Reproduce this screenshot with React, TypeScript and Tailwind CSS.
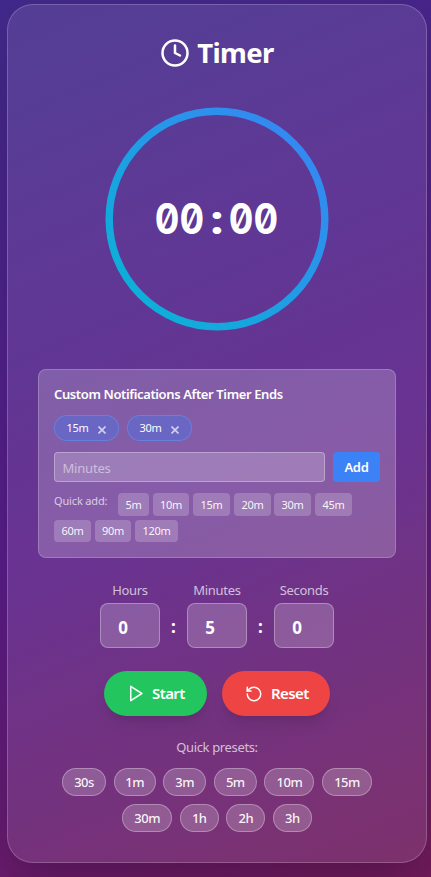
import { Clock, RotateCcw } from "lucide-react";

const quickAdd = [
  { label: "5m", box: "w-[31px] mr-1" },
  { label: "10m", box: "w-9 mr-1" },
  { label: "15m", box: "w-[37px] mr-1" },
  { label: "20m", box: "w-[37px] mr-[3px]" },
  { label: "30m", box: "w-[37px] mr-1" },
  { label: "45m", box: "w-[37px]" },
];
const quickAddMore = [
  { label: "60m", box: "w-[37px]" },
  { label: "90m", box: "w-9" },
  { label: "120m", box: "w-[43px]" },
];
const presets = [
  { label: "30s", box: "w-11" },
  { label: "1m", box: "w-[42px]" },
  { label: "3m", box: "w-[43px]" },
  { label: "5m", box: "w-[43px]" },
  { label: "10m", box: "w-[50px]" },
  { label: "15m", box: "w-[50px]" },
];
const presetsMore = [
  { label: "30m", box: "w-[50px]" },
  { label: "1h", box: "w-[39px]" },
  { label: "2h", box: "w-[39px]" },
  { label: "3h", box: "w-[39px]" },
];

function Chip({ label }: { label: string }) {
  return (
    <div className="flex h-[26px] w-[65px] items-center rounded-full border border-[#5b8bea]/80 bg-[#4f70e0]/50 bg-clip-padding pl-[11.5px] text-[11px] tracking-[-0.35px]">
      <span className="w-[31px]">{label}</span>
      <svg className="mt-[3px]" width="8" height="8" viewBox="0 0 8 8" stroke="white" strokeOpacity="0.7" strokeWidth="1.6">
        <path d="M.5 .5 7.5 7.5M7.5 .5 .5 7.5" />
      </svg>
    </div>
  );
}

function TimeField({ label, value }: { label: string; value: string }) {
  return (
    <label className="flex w-[60px] flex-col items-center">
      <span className="mb-[3px] text-[13px] leading-5 tracking-[-0.3px] text-white/70">{label}</span>
      <span className="flex h-[45px] w-[60px] items-center justify-center rounded-lg border border-white/30 bg-white/20 pr-[14px] pt-[4px] text-[17px] font-bold">
        {value}
      </span>
    </label>
  );
}

function SmallButton({ label, box }: { label: string; box: string }) {
  return (
    <button className={`flex shrink-0 items-center justify-center rounded bg-white/20 pt-px text-[11px] tracking-[-0.35px] text-white/95 ${box}`}>
      {label}
    </button>
  );
}

function Preset({ label, box }: { label: string; box: string }) {
  return (
    <button className={`flex h-7 shrink-0 items-center justify-center rounded-full border border-white/30 bg-white/20 pt-px text-[13px] font-medium tracking-[-0.5px] text-white/95 ${box}`}>
      {label}
    </button>
  );
}

export default function App() {
  return (
    <main className="h-[877px] overflow-hidden bg-[linear-gradient(157deg,#40298a_0%,#581c87_54%,#701a5a_100%)] pl-[7px] pr-1 pt-1 font-['Noto_Sans',sans-serif] text-white">
      <section className="flex h-[859px] w-[420px] flex-col items-center rounded-[26px] border border-white/20 bg-white/10 px-[30px] shadow-2xl">
        <h1 className="mt-7 flex h-10 items-center gap-[7px] text-[27.5px] font-bold tracking-[-0.6px]">
          <Clock size={30} strokeWidth={2} />
          Timer
        </h1>
        <div className="mt-[34px] grid h-[224px] w-[224px] place-items-center">
          <svg className="col-start-1 row-start-1" width="224" height="224" viewBox="0 0 224 224">
            <defs>
              <linearGradient id="ring" x1="0" y1="1" x2="1" y2="0">
                <stop offset="0" stopColor="#06b6d4" />
                <stop offset="1" stopColor="#3b82f6" />
              </linearGradient>
            </defs>
            <circle cx="112" cy="112" r="107.8" fill="none" stroke="url(#ring)" strokeWidth="7.4" />
          </svg>
          <div className="col-start-1 row-start-1 flex font-['Inter',sans-serif] text-[42px] leading-none font-bold [font-feature-settings:'zero']">
            <span className="flex w-[49.4px] justify-center"><span className="scale-x-[0.87] tracking-[0.2px]">00</span></span>
            <span className="flex w-[24.6px] justify-center"><span className="scale-x-120">:</span></span>
            <span className="flex w-[49.4px] justify-center"><span className="scale-x-[0.87] tracking-[0.2px]">00</span></span>
          </div>
        </div>

        <section className="mt-[38px] h-[189px] w-[358px] shrink-0 rounded-lg border border-white/20 bg-white/20 px-[15px] pt-[14px]">
          <h2 className="text-[13px] leading-5 font-semibold tracking-[-0.38px]">Custom Notifications After Timer Ends</h2>
          <div className="mt-[11px] flex gap-2">
            <Chip label="15m" />
            <Chip label="30m" />
          </div>
          <div className="mt-[11px] flex gap-2">
            <input placeholder="Minutes" className="h-[30px] w-[271px] rounded border border-white/30 bg-white/20 px-[7.5px] pt-[2px] text-[13px] tracking-[-0.2px] placeholder:text-white/50" />
            <button className="h-[30px] w-[47px] rounded bg-[#3b82f6] pt-px text-[13px] font-semibold tracking-[-0.3px]">Add</button>
          </div>
          <div className="mt-[11px] flex h-[23px]">
            <span className="w-16 shrink-0 text-[11px] leading-4 tracking-[-0.15px] text-white/70">Quick add:</span>
            {quickAdd.map((b) => <SmallButton key={b.label} {...b} />)}
          </div>
          <div className="mt-1 flex h-[22px] gap-1">
            {quickAddMore.map((b) => <SmallButton key={b.label} {...b} />)}
          </div>
        </section>

        <div className="mt-[22px] flex">
          <TimeField label="Hours" value="0" />
          <span className="w-[27px] pt-[33px] text-center text-[17px] leading-7 font-bold">:</span>
          <TimeField label="Minutes" value="5" />
          <span className="w-[27px] pt-[33px] text-center text-[17px] leading-7 font-bold">:</span>
          <TimeField label="Seconds" value="0" />
        </div>

        <div className="mt-[23px] flex gap-[15px] text-[15px] font-semibold tracking-[-0.6px]">
          <button className="flex h-[45px] w-[103px] items-center rounded-full bg-[#22c55e] pl-[22px] shadow-lg">
            <svg className="mr-[7px]" width="19" height="19" viewBox="0 0 24 24" fill="none" stroke="currentColor" strokeWidth="1.9" strokeLinejoin="round">
              <path d="M6 3 20 12 6 21Z" />
            </svg>
            Start
          </button>
          <button className="flex h-[45px] w-[108px] items-center rounded-full bg-[#ef4444] pl-[23px] shadow-lg">
            <RotateCcw className="mr-2" size={18} strokeWidth={2} />
            Reset
          </button>
        </div>

        <p className="mt-[21px] text-[13px] leading-5 tracking-[-0.36px] text-white/70">Quick presets:</p>
        <div className="mt-[11px] flex gap-[7.6px]">
          {presets.map((p) => <Preset key={p.label} {...p} />)}
        </div>
        <div className="mt-2 flex gap-[7.6px]">
          {presetsMore.map((p) => <Preset key={p.label} {...p} />)}
        </div>
      </section>
    </main>
  );
}
